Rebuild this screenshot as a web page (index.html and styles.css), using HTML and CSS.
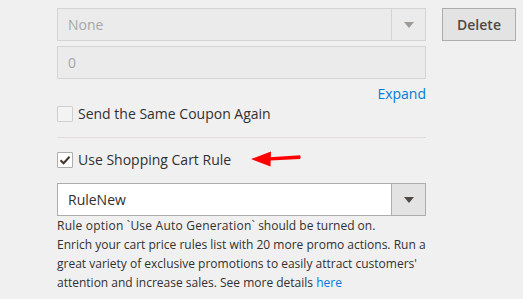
FILE: index.html
```html
<!DOCTYPE html>
<html>
<head>
<meta charset="utf-8">
<link rel="stylesheet" href="styles.css">
</head>
<body>
<div class="page">
  <div class="row">
    <div class="field">
      <div class="select disabled">
        <span class="select-value">None</span>
        <span class="select-arrow"><span class="tri"></span></span>
      </div>
      <div class="input disabled">0</div>
      <div class="expand-row"><a class="link">Expand</a></div>
      <label class="check-row first">
        <span class="checkbox"></span>
        <span class="check-label">Send the Same Coupon Again</span>
      </label>
      <div class="divider"></div>
      <label class="check-row second">
        <span class="checkbox checked">
          <svg width="12" height="10" viewBox="0 0 12 10"><path d="M1.5 5.2 L4.6 8.2 L10.5 1.8" fill="none" stroke="#41362f" stroke-width="2"/></svg>
        </span>
        <span class="check-label">Use Shopping Cart Rule</span>
      </label>
      <div class="select active">
        <span class="select-value">RuleNew</span>
        <span class="select-arrow"><span class="tri"></span></span>
      </div>
      <div class="note"><span class="note-first">Rule option `Use Auto Generation`</span> should be turned on.<br>Enrich your cart price rules list with 20 more promo actions. Run a great variety of exclusive promotions to easily attract customers' attention and increase sales. See more details <a class="link">here</a></div>
    </div>
    <button class="btn">Delete</button>
  </div>
  <svg class="red-arrow" width="56" height="20" viewBox="0 0 56 20">
    <path d="M20 9.3 L50 7.3 Q51.5 9.1 50 11.1 L20 12.6 Z" fill="#ff0000"/>
    <path d="M1 11 L21 3.5 L20.5 18.5 Z" fill="#ff0000"/>
  </svg>
</div>
</body>
</html>
```
FILE: styles.css
```css
* { box-sizing: border-box; }
html, body {
  margin: 0;
  padding: 0;
  background: #f0f0f0;
  font-family: "Open Sans", "DejaVu Sans", sans-serif;
  color: #303030;
}
.page {
  position: relative;
  width: 523px;
  height: 299px;
  padding: 8px 0 0 57px;
  overflow: hidden;
}
.row {
  display: flex;
  align-items: flex-start;
}
.field {
  width: 369px;
  display: flex;
  flex-direction: column;
}
.select {
  height: 33px;
  display: flex;
  border: 1px solid #adadad;
  background: #fff;
}
.select-value {
  flex: 1;
  padding-left: 10px;
  font-size: 14px;
  line-height: 31px;
}
.select-arrow {
  width: 34px;
  border-left: 1px solid #adadad;
  background: #e3e3e3;
  display: flex;
  align-items: center;
  justify-content: center;
}
.tri {
  width: 0;
  height: 0;
  border-left: 5px solid transparent;
  border-right: 5px solid transparent;
  border-top: 6px solid #514943;
  margin-left: 1px;
}
.select.disabled {
  border-color: #d4d4d4;
  background: #ebebeb;
}
.select.disabled .select-value { color: #a6a6a6; }
.select.disabled .select-arrow {
  border-left-color: #d4d4d4;
  background: #ebebeb;
}
.select.disabled .tri { border-top-color: #9e9a97; }
.input {
  margin-top: 5px;
  height: 33px;
  border: 1px solid #d4d4d4;
  background: #ebebeb;
  color: #a6a6a6;
  font-size: 14px;
  line-height: 31px;
  padding-left: 10px;
}
.expand-row {
  margin-top: 5px;
  text-align: right;
  font-size: 14px;
  line-height: 19px;
  height: 19px;
}
.link {
  color: #007bdb;
  text-decoration: none;
}
.check-row {
  display: flex;
  align-items: flex-start;
  font-size: 14px;
  line-height: 19px;
  height: 19px;
}
.check-row.first { margin-top: 1px; }
.check-row.second { margin-top: 12px; }
.checkbox {
  width: 16px;
  height: 16px;
  margin-top: 2px;
  border: 1px solid #cfcfcf;
  border-radius: 1px;
  background: #f3f3f3;
  margin-right: 5px;
  display: flex;
  align-items: center;
  justify-content: center;
}
.checkbox.checked {
  border-color: #adadad;
  background: #fff;
}
.check-label { color: #303030; }
.divider {
  margin-top: 14px;
  height: 1px;
  background: #e0dcdc;
}
.active { margin-top: 14px; }
.note {
  font-size: 12px;
  line-height: 19px;
  color: #303030;
}
.note-first { letter-spacing: 0.22px; }
.btn {
  margin-left: 16px;
  width: 74px;
  height: 33px;
  border: 1px solid #adadad;
  background: #e3e3e3;
  color: #514943;
  font-family: "Open Sans", "DejaVu Sans", sans-serif;
  font-size: 14px;
  font-weight: 600;
  padding: 0;
  border-radius: 0;
}
.red-arrow {
  position: absolute;
  left: 250px;
  top: 148px;
}
```
